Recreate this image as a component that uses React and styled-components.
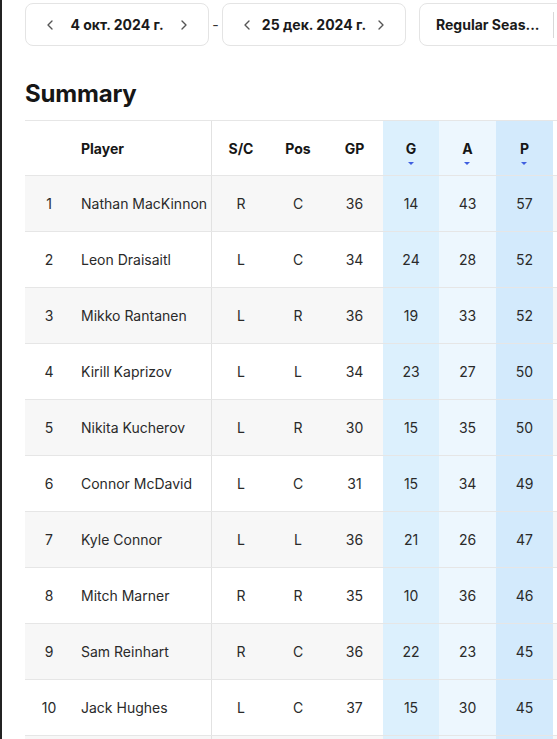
import React from "react";
import styled, { createGlobalStyle } from "styled-components";
import { ChevronLeft, ChevronRight, ChevronDown } from "lucide-react";

const Global = createGlobalStyle`
  html, body { margin: 0; padding: 0; overflow: hidden; background: #fff; }
  body {
    font-family: Inter, "Noto Sans", Roboto, sans-serif;
    color: #1c1c1c;
    border-left: 2px solid #232323;
    min-height: 100vh;
    box-sizing: border-box;
  }
  * { box-sizing: border-box; }
`;

const Page = styled.div`
  padding: 3px 0 0 23px;
  width: 700px;
`;

const Toolbar = styled.div`
  display: flex;
  align-items: center;
`;

const DateBox = styled.div`
  width: 184px;
  height: 43px;
  border: 1px solid #e4e4e4;
  border-radius: 8px;
  background: #fff;
  display: flex;
  align-items: center;
  padding: 0 16px;
`;

const NavIcon = styled.span`
  display: flex;
  align-items: center;
  justify-content: center;
  width: 16px;
  color: #555;
`;

const DateText = styled.span`
  flex: 1;
  text-align: center;
  font-size: 14px;
  font-weight: 700;
  color: #1a1a1a;
`;

const Dash = styled.span`
  width: 13px;
  text-align: center;
  font-size: 14px;
  color: #333;
`;

const SelectBox = styled.div`
  margin-left: 13px;
  height: 43px;
  border: 1px solid #e4e4e4;
  border-radius: 8px;
  display: flex;
  align-items: center;
  padding: 0 0 0 16px;
  width: 190px;
`;

const SelectText = styled.span`
  width: 104px;
  font-size: 14px;
  font-weight: 700;
  color: #1a1a1a;
  white-space: nowrap;
`;

const Divider = styled.span`
  width: 1px;
  height: 26px;
  background: #d8d8d8;
  margin-left: 13px;
`;

const SelectIcon = styled.span`
  display: flex;
  padding: 0 10px;
  color: #555;
`;

const Heading = styled.h2`
  margin: 32px 0 10px;
  font-size: 24px;
  line-height: 32px;
  font-weight: 700;
  color: #161616;
  letter-spacing: -0.2px;
`;

const Table = styled.div`
  border-top: 1px solid #e6e6e6;
`;

const COLS = "48px 139px 58px 56px 57px 56px 57px 57px 90px";

const Row = styled.div`
  display: grid;
  grid-template-columns: ${COLS};
  height: ${(p) => (p.$head ? "55px" : "56px")};
  border-bottom: 1px solid #e6e6e6;
  background: ${(p) => (p.$striped ? "#f7f7f7" : "#fff")};
`;

const tones = {
  g: "#dcf0fd",
  a: "#edf7fe",
  p: "#d3eafc",
};

const Cell = styled.div`
  display: flex;
  align-items: center;
  justify-content: ${(p) => (p.$left ? "flex-start" : "center")};
  padding-left: ${(p) => (p.$left ? "8px" : "0")};
  font-size: 14px;
  color: #2a2a2a;
  white-space: nowrap;
  background: ${(p) => (p.$tone ? tones[p.$tone] : "transparent")};
  border-right: ${(p) => (p.$divider ? "1px solid #e2e2e2" : "none")};
`;

const HeadCell = styled(Cell)`
  font-weight: 700;
  color: #161616;
`;

const SortLabel = styled.span`
  position: relative;
  &::after {
    content: "";
    position: absolute;
    left: 50%;
    top: 22px;
    transform: translateX(-50%);
    border-left: 3px solid transparent;
    border-right: 3px solid transparent;
    border-top: 3px solid #3f5fe0;
  }
`;

const players = [
  [1, "Nathan MacKinnon", "R", "C", 36, 14, 43, 57],
  [2, "Leon Draisaitl", "L", "C", 34, 24, 28, 52],
  [3, "Mikko Rantanen", "L", "R", 36, 19, 33, 52],
  [4, "Kirill Kaprizov", "L", "L", 34, 23, 27, 50],
  [5, "Nikita Kucherov", "L", "R", 30, 15, 35, 50],
  [6, "Connor McDavid", "L", "C", 31, 15, 34, 49],
  [7, "Kyle Connor", "L", "L", 36, 21, 26, 47],
  [8, "Mitch Marner", "R", "R", 35, 10, 36, 46],
  [9, "Sam Reinhart", "R", "C", 36, 22, 23, 45],
  [10, "Jack Hughes", "L", "C", 37, 15, 30, 45],
  [11, "", "", "", "", "", "", ""],
];

export default function App() {
  return (
    <>
      <Global />
      <Page>
        <Toolbar>
          <DateBox>
            <NavIcon><ChevronLeft size={16} strokeWidth={2} /></NavIcon>
            <DateText>4 окт. 2024 г.</DateText>
            <NavIcon><ChevronRight size={16} strokeWidth={2} /></NavIcon>
          </DateBox>
          <Dash>-</Dash>
          <DateBox>
            <NavIcon><ChevronLeft size={16} strokeWidth={2} /></NavIcon>
            <DateText>25 дек. 2024 г.</DateText>
            <NavIcon><ChevronRight size={16} strokeWidth={2} /></NavIcon>
          </DateBox>
          <SelectBox>
            <SelectText>Regular Seas...</SelectText>
            <Divider />
            <SelectIcon><ChevronDown size={16} /></SelectIcon>
          </SelectBox>
        </Toolbar>
        <Heading>Summary</Heading>
        <Table>
          <Row $head>
            <HeadCell />
            <HeadCell $left $divider>Player</HeadCell>
            <HeadCell>S/C</HeadCell>
            <HeadCell>Pos</HeadCell>
            <HeadCell>GP</HeadCell>
            <HeadCell $tone="g"><SortLabel>G</SortLabel></HeadCell>
            <HeadCell $tone="a"><SortLabel>A</SortLabel></HeadCell>
            <HeadCell $tone="p"><SortLabel>P</SortLabel></HeadCell>
            <HeadCell />
          </Row>
          {players.map(([n, name, sc, pos, gp, g, a, p]) => (
            <Row key={n} $striped={n % 2 === 1}>
              <Cell>{name ? n : ""}</Cell>
              <Cell $left $divider>{name}</Cell>
              <Cell>{sc}</Cell>
              <Cell>{pos}</Cell>
              <Cell>{gp}</Cell>
              <Cell $tone="g">{g}</Cell>
              <Cell $tone="a">{a}</Cell>
              <Cell $tone="p">{p}</Cell>
              <Cell />
            </Row>
          ))}
        </Table>
      </Page>
    </>
  );
}
